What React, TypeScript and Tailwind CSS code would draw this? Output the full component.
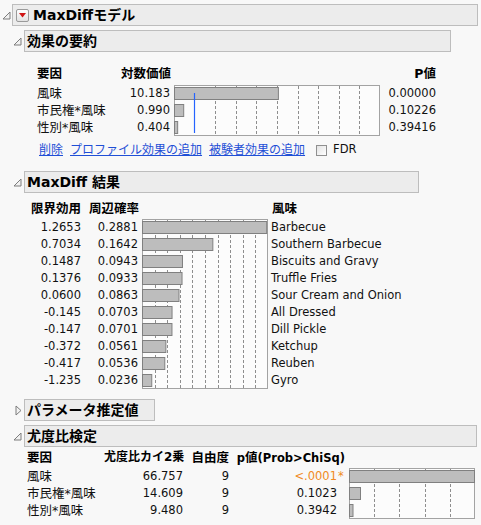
import React from 'react';

// 行の高さ (px)
const ROW = 17;

function OpenTri() {
  return (
    <svg width="9" height="9" viewBox="0 0 9 9">
      <path d="M8 1 L8 8 L1 8 Z" fill="#f2f2f2" stroke="#7d7d7d" strokeWidth="1" />
    </svg>
  );
}

function ClosedTri() {
  return (
    <svg width="7" height="11" viewBox="0 0 7 11">
      <path d="M1 1 L6 5.5 L1 10 Z" fill="#f2f2f2" stroke="#7d7d7d" strokeWidth="1" />
    </svg>
  );
}

function RedMenu() {
  return (
    <div className="w-[13px] h-[13px] border border-[#9a9a9a] rounded-[2px] bg-gradient-to-b from-white to-[#e2e2e2] flex items-center justify-center">
      <svg width="7" height="5" viewBox="0 0 7 5">
        <path d="M0 0 H7 L3.5 4.5 Z" fill="#d01515" />
      </svg>
    </div>
  );
}

// サブセクションの見出し
function SubHeader({ title, width, open = true, className = '' }: { title: string; width: number; open?: boolean; className?: string }) {
  return (
    <div className={`flex h-[22px] ${className}`}>
      <div className="w-[24px] flex items-center justify-end pr-[2px]">{open ? <OpenTri /> : <ClosedTri />}</div>
      <div
        className="h-full border border-[#bdbdbd] bg-[#ececec] flex items-center pl-[2px] text-[14px] font-bold text-black"
        style={{ width }}
      >
        {title}
      </div>
    </div>
  );
}

type ChartProps = {
  width: number;
  bars: number[];
  grid: number[];
  blue?: number;
};

function BarChart({ width, bars, grid, blue }: ChartProps) {
  const h = bars.length * ROW;
  return (
    <svg width={width} height={h} viewBox={`0 0 ${width} ${h}`} className="block">
      <rect x="0.5" y="0.5" width={width - 1} height={h - 1} fill="#fcfcfc" stroke="#a3a3a3" />
      {grid.map((g) => (
        <line key={g} x1={Math.round(g) + 0.5} x2={Math.round(g) + 0.5} y1="1" y2={h - 1} stroke="#8e8e8e" strokeDasharray="3 2" />
      ))}
      {bars.map((b, i) => (
        <rect key={i} x="0.5" y={i * ROW + 2.5} width={Math.max(b - 1, 1)} height="12" fill="#bdbdbd" stroke="#808080" />
      ))}
      {blue !== undefined && (
        <line x1={blue + 0.5} x2={blue + 0.5} y1="8" y2={h - 3} stroke="#2563ff" strokeWidth="1.2" />
      )}
    </svg>
  );
}

const summary = [
  { name: '風味', lw: '10.183', p: '0.00000', v: 10.183 },
  { name: '市民権*風味', lw: '0.990', p: '0.10226', v: 0.99 },
  { name: '性別*風味', lw: '0.404', p: '0.39416', v: 0.404 },
];

const maxdiff = [
  { u: '1.2653', p: 0.2881, name: 'Barbecue' },
  { u: '0.7034', p: 0.1642, name: 'Southern Barbecue' },
  { u: '0.1487', p: 0.0943, name: 'Biscuits and Gravy' },
  { u: '0.1376', p: 0.0933, name: 'Truffle Fries' },
  { u: '0.0600', p: 0.0863, name: 'Sour Cream and Onion' },
  { u: '-0.145', p: 0.0703, name: 'All Dressed' },
  { u: '-0.147', p: 0.0701, name: 'Dill Pickle' },
  { u: '-0.372', p: 0.0561, name: 'Ketchup' },
  { u: '-0.417', p: 0.0536, name: 'Reuben' },
  { u: '-1.235', p: 0.0236, name: 'Gyro' },
];

const lr = [
  { name: '風味', chi: '66.757', df: '9', p: '<.0001', sig: true, w: 126 },
  { name: '市民権*風味', chi: '14.609', df: '9', p: '0.1023', sig: false, w: 12 },
  { name: '性別*風味', chi: '9.480', df: '9', p: '0.3942', sig: false, w: 4.5 },
];

const range = (n: number, step: number, from = 1) => Array.from({ length: n }, (_, i) => (i + from) * step);

export default function App() {
  return (
    <div className="w-[481px] h-[525px] overflow-hidden bg-[#f8f8f8] text-[#111] font-['DejaVu_Sans','Noto_Sans_CJK_JP',sans-serif]">
      {/* MaxDiffモデル */}
      <div className="flex h-[22px] mt-[4px]">
        <div className="w-[12px] flex items-center justify-center"><OpenTri /></div>
        <div className="flex-1 mr-[3px] border border-[#bdbdbd] bg-[#ececec] flex items-center pl-[3px] gap-[4px]">
          <RedMenu />
          <span className="text-[14px] font-bold text-black">MaxDiffモデル</span>
        </div>
      </div>

      {/* 効果の要約 */}
      <SubHeader title="効果の要約" width={427} className="mt-[4px]" />
      <div className="ml-[37px] mt-[13px]">
        <div className="flex h-[17px] leading-[17px] font-bold text-[12.5px] text-black">
          <div className="w-[80px]">要因</div>
          <div className="w-[54px] text-right">対数価値</div>
          <div className="w-[209px]" />
          <div className="w-[56px] text-right">P値</div>
        </div>
        <div className="flex mt-[3px]">
          <div className="w-[80px] text-[12.5px]">
            {summary.map((r) => (
              <div key={r.name} className="h-[17px] leading-[17px]">{r.name}</div>
            ))}
          </div>
          <div className="w-[53px] text-right text-[11.5px]">
            {summary.map((r) => (
              <div key={r.name} className="h-[17px] leading-[17px]">{r.lw}</div>
            ))}
          </div>
          <div className="ml-[4px]">
            <BarChart width={206} bars={summary.map((r) => (r.v / 20) * 206)} grid={range(8, 20.6, 2)} blue={20} />
          </div>
          <div className="w-[56px] text-right text-[11.5px]">
            {summary.map((r) => (
              <div key={r.name} className="h-[17px] leading-[17px]">{r.p}</div>
            ))}
          </div>
        </div>
        <div className="flex items-center h-[16px] mt-[6px] pl-[2px] text-[12px] text-[#1f4fd6] gap-[7px]">
          <span className="underline">削除</span>
          <span className="underline">プロファイル効果の追加</span>
          <span className="underline">被験者効果の追加</span>
          <div className="ml-[4px] w-[11px] h-[11px] border border-[#8f8f8f] bg-gradient-to-br from-[#e3e3e3] to-white" />
          <span className="-ml-[1px] text-[11.5px] text-[#111]">FDR</span>
        </div>
      </div>

      {/* MaxDiff 結果 */}
      <SubHeader title="MaxDiff 結果" width={395} className="mt-[13px]" />
      <div className="ml-[30px] mt-[7px]">
        <div className="flex h-[17px] leading-[17px] font-bold text-[12.5px] text-black">
          <div className="w-[51px] text-right">限界効用</div>
          <div className="w-[58px] text-right">周辺確率</div>
          <div className="w-[133px]" />
          <div>風味</div>
        </div>
        <div className="flex mt-[2px] text-[11.5px]">
          <div className="w-[51px] text-right">
            {maxdiff.map((r) => (
              <div key={r.name} className="h-[17px] leading-[17px]">{r.u}</div>
            ))}
          </div>
          <div className="w-[57px] text-right">
            {maxdiff.map((r) => (
              <div key={r.name} className="h-[17px] leading-[17px]">{r.p.toFixed(4)}</div>
            ))}
          </div>
          <div className="ml-[4px]">
            <BarChart width={126} bars={maxdiff.map((r) => (r.p / 0.29) * 126)} grid={range(9, 12.6)} />
          </div>
          <div className="ml-[3px]">
            {maxdiff.map((r) => (
              <div key={r.name} className="h-[17px] leading-[17px]">{r.name}</div>
            ))}
          </div>
        </div>
      </div>

      {/* パラメータ推定値 */}
      <SubHeader title="パラメータ推定値" width={131} open={false} className="mt-[10px]" />

      {/* 尤度比検定 */}
      <SubHeader title="尤度比検定" width={453} className="mt-[4px]" />
      <div className="ml-[27px] mt-[2px]">
        <div className="flex h-[17px] leading-[17px] font-bold text-[12.5px] text-black whitespace-nowrap">
          <div className="w-[77px]">要因</div>
          <div className="w-[79px] text-right text-[12px]">尤度比カイ2乗</div>
          <div className="w-[46px] text-right">自由度</div>
          <div className="w-[116px] text-right text-[11.5px]">
            p<span className="text-[12.5px]">値</span>(Prob&gt;ChiSq)
          </div>
        </div>
        <div className="flex mt-[2px]">
          <div className="w-[77px] text-[12.5px]">
            {lr.map((r) => (
              <div key={r.name} className="h-[17px] leading-[17px]">{r.name}</div>
            ))}
          </div>
          <div className="w-[79px] text-right text-[11.5px]">
            {lr.map((r) => (
              <div key={r.name} className="h-[17px] leading-[17px]">{r.chi}</div>
            ))}
          </div>
          <div className="w-[46px] text-right text-[11.5px]">
            {lr.map((r) => (
              <div key={r.name} className="h-[17px] leading-[17px]">{r.df}</div>
            ))}
          </div>
          <div className="w-[116px] text-right text-[11.5px]">
            {lr.map((r) => (
              <div key={r.name} className={`h-[17px] leading-[17px] flex justify-end ${r.sig ? 'text-[#f08a24]' : ''}`}>
                <span>{r.p}</span>
                <span className="w-[8px] text-left pl-[1px]">{r.sig ? '*' : ''}</span>
              </div>
            ))}
          </div>
          <div className="ml-[4px]">
            <BarChart width={126} bars={lr.map((r) => r.w)} grid={range(4, 25.2)} />
          </div>
        </div>
      </div>
    </div>
  );
}
